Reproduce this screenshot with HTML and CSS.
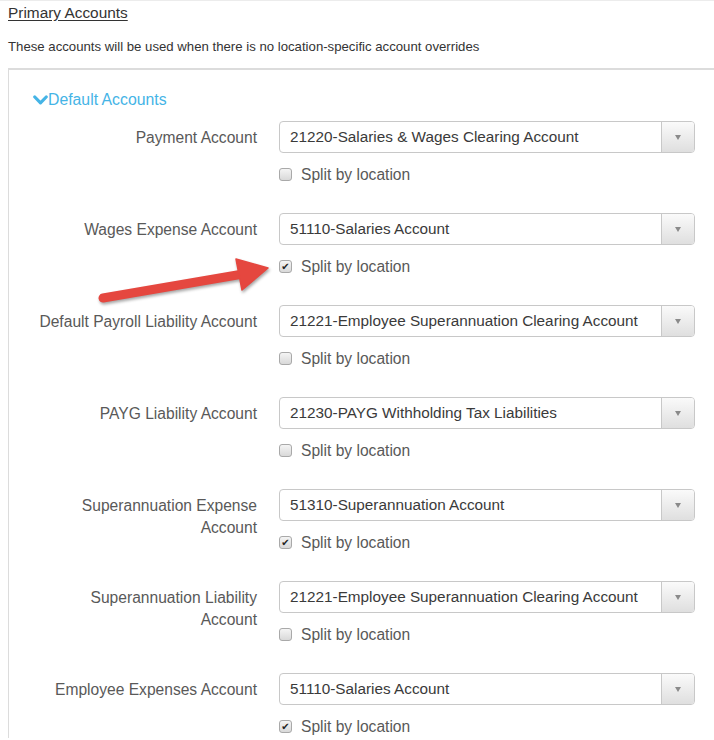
FILE: index.html
```html
<!DOCTYPE html>
<html>
<head>
<meta charset="utf-8">
<link rel="stylesheet" href="styles.css">
</head>
<body>
<div class="page">
  <h2 class="title">Primary Accounts</h2>
  <p class="desc">These accounts will be used when there is no location-specific account overrides</p>
  <div class="panel">
    <div class="section-head">
      <svg class="chev" width="15" height="11" viewBox="0 0 15 11"><path d="M1.8 2 L7.5 7.8 L13.2 2" fill="none" stroke="#45b4e6" stroke-width="3.2" stroke-linecap="round" stroke-linejoin="round"/></svg>
      <span>Default Accounts</span>
    </div>

    <div class="row">
      <div class="label">Payment Account</div>
      <div class="field">
        <div class="select"><span class="value">21220-Salaries &amp; Wages Clearing Account</span><span class="btn"><i class="tri"></i></span></div>
        <label class="check"><span class="box"></span>Split by location</label>
      </div>
    </div>

    <div class="row">
      <div class="label">Wages Expense Account</div>
      <div class="field">
        <div class="select"><span class="value">51110-Salaries Account</span><span class="btn"><i class="tri"></i></span></div>
        <label class="check"><span class="box checked">&#10004;</span>Split by location</label>
      </div>
    </div>

    <div class="row">
      <div class="label">Default Payroll Liability Account</div>
      <div class="field">
        <div class="select"><span class="value">21221-Employee Superannuation Clearing Account</span><span class="btn"><i class="tri"></i></span></div>
        <label class="check"><span class="box"></span>Split by location</label>
      </div>
    </div>

    <div class="row">
      <div class="label">PAYG Liability Account</div>
      <div class="field">
        <div class="select"><span class="value">21230-PAYG Withholding Tax Liabilities</span><span class="btn"><i class="tri"></i></span></div>
        <label class="check"><span class="box"></span>Split by location</label>
      </div>
    </div>

    <div class="row">
      <div class="label">Superannuation Expense<br>Account</div>
      <div class="field">
        <div class="select"><span class="value">51310-Superannuation Account</span><span class="btn"><i class="tri"></i></span></div>
        <label class="check"><span class="box checked">&#10004;</span>Split by location</label>
      </div>
    </div>

    <div class="row">
      <div class="label">Superannuation Liability<br>Account</div>
      <div class="field">
        <div class="select"><span class="value">21221-Employee Superannuation Clearing Account</span><span class="btn"><i class="tri"></i></span></div>
        <label class="check"><span class="box"></span>Split by location</label>
      </div>
    </div>

    <div class="row last">
      <div class="label">Employee Expenses Account</div>
      <div class="field">
        <div class="select"><span class="value">51110-Salaries Account</span><span class="btn"><i class="tri"></i></span></div>
        <label class="check"><span class="box checked">&#10004;</span>Split by location</label>
      </div>
    </div>
  </div>
</div>
<svg class="arrow" width="714" height="740" viewBox="0 0 714 740">
  <g class="arrow-g">
    <line x1="103" y1="298" x2="243" y2="274" stroke="#e5473f" stroke-width="9" stroke-linecap="round"/>
    <polygon points="236,259 268,268 242,290" fill="#e5473f" stroke="#e5473f" stroke-width="1.5" stroke-linejoin="round"/>
  </g>
</svg>
</body>
</html>
```

FILE: styles.css
```css
html, body {
  margin: 0;
  padding: 0;
  overflow: hidden;
  background: #fff;
}
body {
  position: relative;
  width: 714px;
  height: 740px;
  font-family: "Liberation Sans", Arial, sans-serif;
  color: #555;
}
.page {
  border-top: 1px solid #ececec;
  padding-left: 8px;
}
.title {
  margin: 0;
  padding-top: 1px;
  font-size: 15.4px;
  line-height: 22px;
  font-weight: normal;
  color: #333;
  text-decoration: underline;
  text-underline-offset: 2px;
}
.desc {
  margin: 13px 0 0 0;
  font-size: 13.2px;
  line-height: 20px;
  color: #333;
}
.panel {
  margin-top: 11px;
  margin-right: -30px;
  border-top: 2px solid #dcdcdc;
  border-left: 1px solid #dcdcdc;
  padding-top: 19px;
}
.section-head {
  display: flex;
  align-items: center;
  padding-left: 24px;
  height: 22px;
  margin-bottom: 10px;
  font-size: 15.8px;
  color: #45b4e6;
}
.chev {
  margin-right: 0;
}
.row {
  display: grid;
  grid-template-columns: 248px 416px;
  column-gap: 22px;
  height: 92px;
}
.row.last {
  height: auto;
}
.label {
  text-align: right;
  font-size: 15.6px;
  line-height: 22px;
  padding-top: 6px;
  color: #595959;
}
.select {
  display: flex;
  height: 32px;
  box-sizing: border-box;
  border: 1px solid #c8c8c8;
  border-radius: 4px;
  background: #fff;
  overflow: hidden;
}
.value {
  flex: 1;
  padding-left: 10px;
  font-size: 15.3px;
  line-height: 29px;
  color: #3a3a3a;
  white-space: nowrap;
}
.btn {
  width: 32px;
  border-left: 1px solid #c8c8c8;
  background: linear-gradient(#fafafa, #dfdfdf);
  display: flex;
  align-items: center;
  justify-content: center;
}
.tri {
  width: 0;
  height: 0;
  border-left: 3.5px solid transparent;
  border-right: 3.5px solid transparent;
  border-top: 5px solid #8a8a8a;
}
.check {
  display: flex;
  align-items: center;
  margin-top: 11px;
  height: 22px;
  font-size: 15.6px;
  color: #595959;
}
.box {
  width: 13px;
  height: 13px;
  box-sizing: border-box;
  border: 1px solid #a9a9a9;
  border-radius: 3px;
  background: linear-gradient(#f4f4f4, #d9d9d9);
  margin-right: 9px;
  margin-top: -2px;
  font-size: 10px;
  line-height: 11px;
  text-align: center;
  color: #222;
  font-family: "DejaVu Sans", sans-serif;
}
.arrow {
  position: absolute;
  left: 0;
  top: 0;
  pointer-events: none;
}
.arrow-g {
  filter: drop-shadow(1px 2px 1.5px rgba(0, 0, 0, 0.35));
}
```
